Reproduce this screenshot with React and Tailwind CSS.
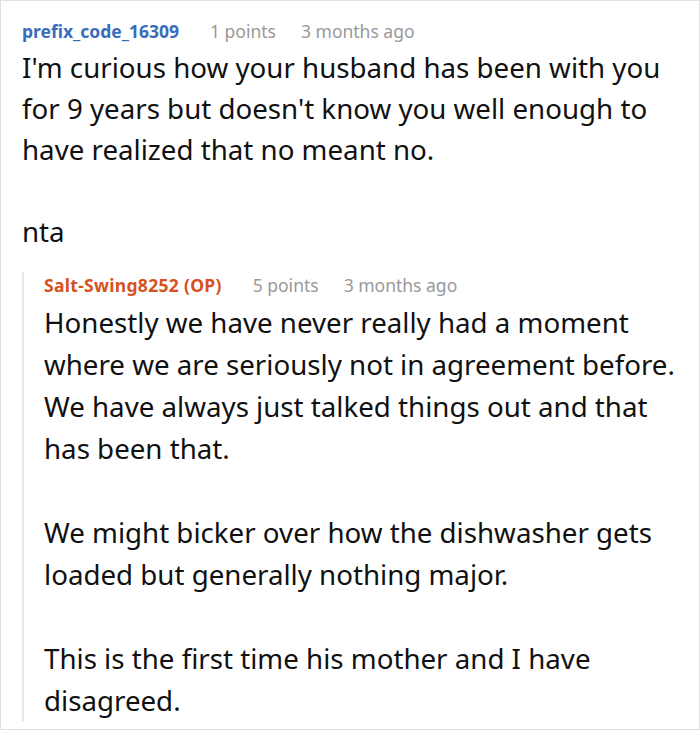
const Lines = ({ lines, className }) => (
  <div className={className}>
    {lines.map((l, i) => (
      <div key={i} className="whitespace-nowrap">{l === "" ? "\u00a0" : l}</div>
    ))}
  </div>
);

export default function App() {
  const font = { fontFamily: '"Noto Sans", "Open Sans", sans-serif' };
  return (
    <div className="w-[700px] h-[730px] bg-white border border-[#e0e0e0] overflow-hidden" style={font}>
      <div className="pl-[21px] pr-4 pt-[17px]">
        <div className="flex items-baseline gap-[31px] text-[17.5px] leading-[26px]">
          <span className="font-bold text-[#3a6bbd]">prefix_code_16309</span>
          <span className="text-[#999999]">1 points</span>
          <span className="text-[#999999] -ml-[6px]">3 months ago</span>
        </div>
        <Lines
          className="text-[27.7px] leading-[41px] text-[#111111] mt-[3px]"
          lines={[
            "I'm curious how your husband has been with you",
            "for 9 years but doesn't know you well enough to",
            "have realized that no meant no.",
            "",
            "nta",
          ]}
        />
        <div className="mt-[31px] border-l-2 border-[#e6e6e6] pl-[20px]">
          <div className="-mt-[11px] flex items-baseline gap-[31px] text-[17.5px] leading-[26px]">
            <span className="font-bold text-[#d5521c] tracking-[0.3px]">Salt-Swing8252 (OP)</span>
            <span className="text-[#999999]">5 points</span>
            <span className="text-[#999999] -ml-[6px]">3 months ago</span>
          </div>
          <Lines
            className="text-[27.7px] leading-[42px] text-[#111111] mt-[3px] -mb-[10px]"
            lines={[
              "Honestly we have never really had a moment",
              "where we are seriously not in agreement before.",
              "We have always just talked things out and that",
              "has been that.",
              "",
              "We might bicker over how the dishwasher gets",
              "loaded but generally nothing major.",
              "",
              "This is the first time his mother and I have",
              "disagreed.",
            ]}
          />
        </div>
      </div>
    </div>
  );
}
